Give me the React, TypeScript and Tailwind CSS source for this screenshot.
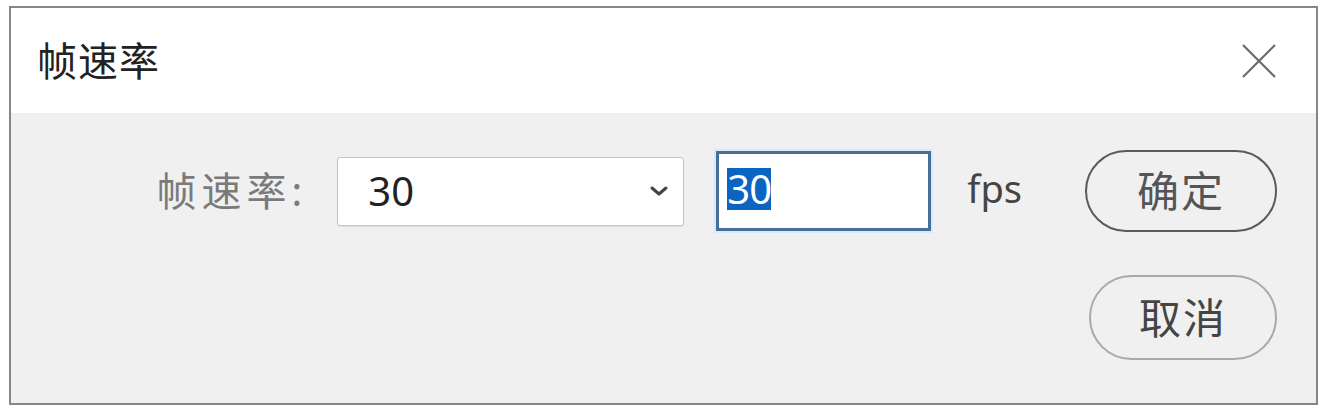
import React from 'react';

const font = { fontFamily: '"Noto Sans", "Noto Sans CJK SC", sans-serif' };

function CloseIcon() {
  return (
    <svg width="34" height="34" viewBox="0 0 34 34" className="text-[#6b6b6b]">
      <path d="M1 1 L33 33 M33 1 L1 33" stroke="currentColor" strokeWidth="2.2" fill="none" />
    </svg>
  );
}

function Chevron() {
  return (
    <svg width="20" height="12" viewBox="0 0 20 12" className="text-[#444]">
      <path d="M3 3 L10 9 L17 3" stroke="currentColor" strokeWidth="3" fill="none" strokeLinecap="round" strokeLinejoin="round" />
    </svg>
  );
}

export default function App() {
  return (
    <div className="w-[1320px] h-[408px] bg-white overflow-hidden pt-[6px] pl-[9px]" style={font}>
      <div className="w-[1309px] h-[399px] border-2 border-[#868686] flex flex-col">
        {/* title bar */}
        <div className="h-[105px] bg-white flex items-center justify-between pl-[26px] pr-[40px]">
          <span className="text-[40px] leading-none text-[#222] tracking-[1px]">帧速率</span>
          <CloseIcon />
        </div>

        {/* body */}
        <div className="flex-1 bg-[#f0f0f0] pt-[37px] pr-[39px] flex flex-col items-end">
          <div className="flex items-center h-[82px]">
            <span className="text-[40px] leading-none text-[#7a7a7a] tracking-[5px] mr-[30px]">帧速率:</span>
            <div className="w-[347px] h-[69px] bg-white border border-[#c6c6c6] rounded-[3px] shadow-[0_1px_1px_rgba(0,0,0,0.08)] flex items-center justify-between pl-[30px] pr-[14px] mr-[32px]">
              <span className="text-[40px] leading-none text-[#222]">30</span>
              <Chevron />
            </div>
            <div className="w-[215px] h-[80px] bg-white border-[3px] border-[#4a6f96] ring-2 ring-[#d6ecfb] flex items-center pl-[8px] pb-[4px] mr-[36px]">
              <span className="bg-[#0b63c2] text-white text-[40px] leading-[42px] h-[42px] tracking-[-1px]">30</span>
            </div>
            <span className="text-[38px] leading-none text-[#444] mr-[63px] pb-[6px]">fps</span>
            <button className="w-[192px] h-[82px] rounded-full border-2 border-[#5a5a5a] bg-[#f0f0f0] text-[42px] leading-none text-[#555] tracking-[2px]">
              确定
            </button>
          </div>
          <button className="mt-[43px] w-[188px] h-[85px] rounded-full border-2 border-[#a9a9a9] bg-[#f0f0f0] text-[42px] leading-none text-[#444] tracking-[2px]">
            取消
          </button>
        </div>
      </div>
    </div>
  );
}
